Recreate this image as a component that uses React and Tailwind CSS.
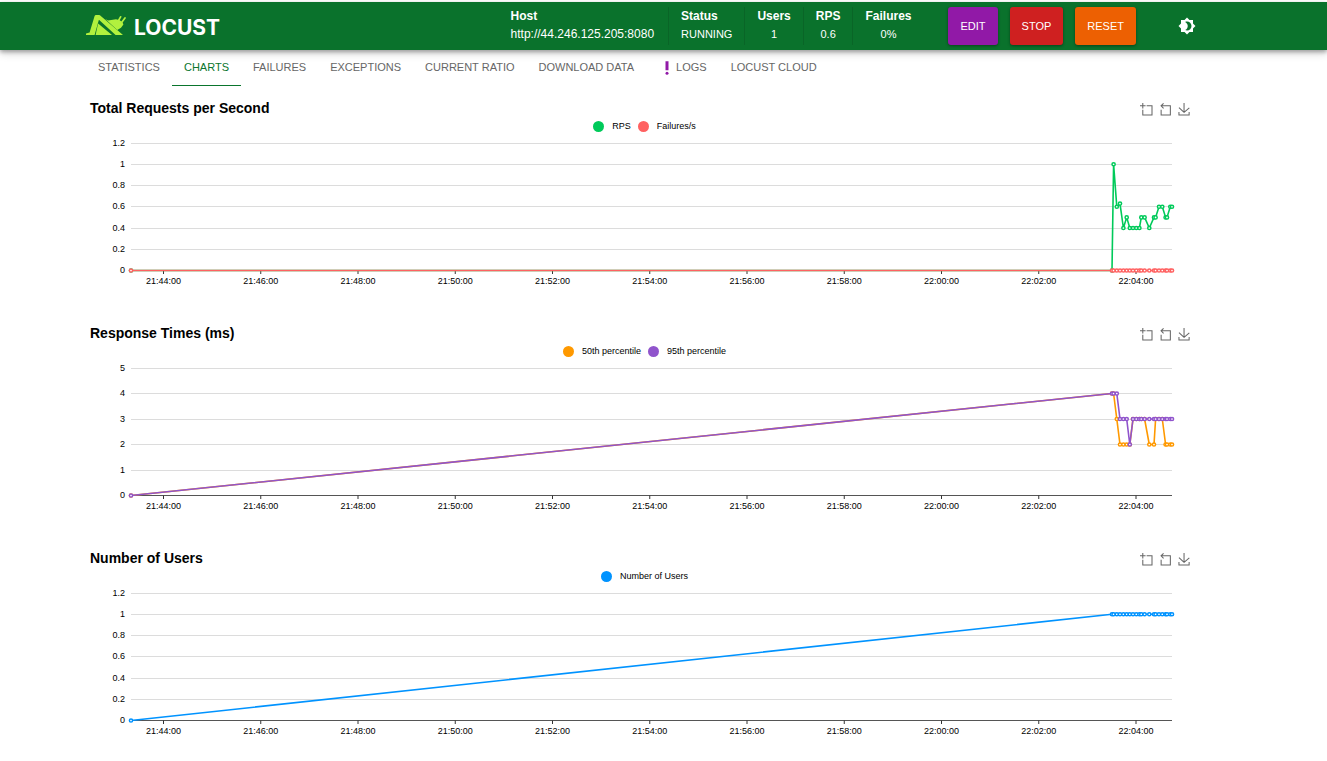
import React from "react";
import { MdBrightness4, MdPriorityHigh } from "react-icons/md";

const TABS = [
  { label: "STATISTICS" },
  { label: "CHARTS", active: true },
  { label: "FAILURES" },
  { label: "EXCEPTIONS" },
  { label: "CURRENT RATIO" },
  { label: "DOWNLOAD DATA" },
  { label: "LOGS", alert: true },
  { label: "LOCUST CLOUD" },
];

const STATS = [
  { label: "Users", value: "1" },
  { label: "RPS", value: "0.6" },
  { label: "Failures", value: "0%" },
];

const TIMES = [
  "21:44:00", "21:46:00", "21:48:00", "21:50:00", "21:52:00", "21:54:00",
  "21:56:00", "21:58:00", "22:00:00", "22:02:00", "22:04:00",
];

// Sample positions along the time axis, in chart units.
const XS = [
  45, 1026, 1027.6, 1030.8, 1034, 1037.4, 1040.7, 1043.8, 1047, 1050.3, 1053.4,
  1055.3, 1058.6, 1063.3, 1068, 1069.6, 1073, 1076.3, 1079.6, 1081, 1084.3, 1086,
];

const rep = (v, n) => Array(n).fill(v);

const CHARTS = [
  {
    title: "Total Requests per Second",
    max: 1.2,
    ticks: [0, 0.2, 0.4, 0.6, 0.8, 1, 1.2],
    series: [
      {
        name: "RPS",
        color: "#00ca5a",
        data: [0, 0, 1, 0.6, 0.63, 0.4, 0.5, 0.4, 0.4, 0.4, 0.4, 0.5, 0.5, 0.4, 0.5, 0.5, 0.6, 0.6, 0.5, 0.5, 0.6, 0.6],
      },
      { name: "Failures/s", color: "#ff6161", data: rep(0, 22) },
    ],
  },
  {
    title: "Response Times (ms)",
    max: 5,
    ticks: [0, 1, 2, 3, 4, 5],
    series: [
      {
        name: "50th percentile",
        color: "#ff9900",
        data: [0, 4, 4, 3, 2, 2, 2, 2, 3, 3, 3, 3, 3, 2, 2, 3, 3, 3, 2, 2, 2, 2],
      },
      {
        name: "95th percentile",
        color: "#9054cc",
        data: [0, 4, 4, 4, 3, 3, 3, 2, ...rep(3, 14)],
      },
    ],
  },
  {
    title: "Number of Users",
    max: 1.2,
    ticks: [0, 0.2, 0.4, 0.6, 0.8, 1, 1.2],
    series: [{ name: "Number of Users", color: "#0093ff", data: [0, ...rep(1, 21)] }],
  },
];

const TOOLS = [
  { label: "Zoom", d: "M0,13.5h26.9 M13.5,26.9V0 M32.1,13.5H58V58H13.5V32.1" },
  { label: "Zoom reset", d: "M22,1.4L9.9,13.5l12.3,12.3 M10.3,13.5H54.9v44.6H10.3v-26" },
  { label: "Download", d: "M4.7,22.9L29.3,45.5L54.7,23.4M4.6,43.6L4.6,58L53.8,58L53.8,43.6M29.2,45.1L29.2,0" },
];

const BASE = 138.5;
const PLOT = 127.5;

function Logo() {
  return (
    <a href="#home" className="flex items-baseline gap-2 text-white">
      <svg viewBox="0 0 40 20" className="h-5 w-10" fill="#b2f13e" aria-hidden="true">
        <path d="M0 20 V18.400 L3.600 17.400 L8.600 1 Q9 0 10 0 H13 Q14 0 14.800 .9 L37 20 H29.600 L12.900 4.800 L8.600 20 Z" />
        <path d="M9.600 20 L12.100 8.400 L26 20 Z" />
        <path d="M19.200 3.900 L22 5.600 L30 4.200 L33.800 5.200 L36.600 7.400 L37.400 9.400 L35 12.800 L31.300 14.900 Z" />
        <path d="M32.300 6 L34.600 1.800 M35.600 7.600 L39 2.900" stroke="#b2f13e" strokeWidth="1.700" strokeLinecap="round" fill="none" />
      </svg>
      <span className="font-[Inter,sans-serif] text-[21px] leading-5 font-bold">LOCUST</span>
    </a>
  );
}

function Chart({ title, max, ticks, series }) {
  const y = (v) => BASE - (v / max) * PLOT;
  return (
    <section>
      <div className="flex h-6 items-center justify-between pr-[13px] pl-1">
        <h2 className="text-sm font-bold text-black">{title}</h2>
        <div className="flex gap-[7px] pt-0.5">
          {TOOLS.map((t) => (
            <button key={t.label} type="button" aria-label={t.label} className="block">
              <svg viewBox="0 0 58 58" className="size-3 overflow-visible" fill="none" stroke="#666" strokeWidth="5">
                <path d={t.d} />
              </svg>
            </button>
          ))}
        </div>
      </div>
      <div className="flex h-3 items-center justify-center gap-[7px] text-[9px] leading-3 text-black">
        {series.map((s) => (
          <span key={s.name} className="flex items-center gap-2">
            <svg viewBox="0 0 11 11" className="size-[11px]" aria-hidden="true">
              <circle cx="5.5" cy="5.5" r="5.5" fill={s.color} />
            </svg>
            {s.name}
          </span>
        ))}
      </div>
      <svg viewBox="0 0 1117 158" className="block h-auto w-full" role="img" aria-label={title}>
        {ticks.map((t) => (
          <g key={t}>
            {t > 0 && (
              <line x1="45" x2="1086" y1={Math.floor(y(t)) + 0.5} y2={Math.floor(y(t)) + 0.5} stroke="#dcdcdc" />
            )}
            <text x="39" y={Math.floor(y(t)) + 3} textAnchor="end" fontSize="9" fill="#000">
              {t}
            </text>
          </g>
        ))}
        <line x1="45" x2="1086" y1={BASE} y2={BASE} stroke="#555" />
        {TIMES.map((t, i) => {
          const x = 77.5 + i * 97.25;
          return (
            <g key={t}>
              <line x1={x} x2={x} y1={BASE} y2={BASE + 3.5} stroke="#333" />
              <text x={x} y="152" textAnchor="middle" fontSize="9" fill="#000">
                {t}
              </text>
            </g>
          );
        })}
        {series.map((s) => (
          <g key={s.name} stroke={s.color}>
            <polyline
              points={s.data.map((v, i) => `${XS[i]},${y(v)}`).join(" ")}
              fill="none"
              strokeWidth="1.6"
              strokeLinejoin="bevel"
            />
            {s.data.map((v, i) => (
              <circle key={i} cx={XS[i]} cy={y(v)} r="1.6" fill="#fff" strokeWidth="1.5" />
            ))}
          </g>
        ))}
      </svg>
    </section>
  );
}

export default function App() {
  return (
    <div className="min-h-screen bg-white pt-0.5 font-['Liberation_Sans',Arial,sans-serif]">
      <header className="flex h-12 items-center justify-between bg-[#0a722c] pr-[131px] pl-[86px] text-white shadow-[0_2px_4px_rgba(0,0,0,0.3),0_4px_8px_rgba(0,0,0,0.14)]">
        <Logo />
        <div className="flex items-center">
          <dl className="flex divide-x divide-[#096527]">
            <div className="flex h-[38px] flex-col pr-[14px] pl-3">
              <dt className="text-xs leading-[18px] font-bold">Host</dt>
              <dd className="text-xs leading-[18px]">http://44.246.125.205:8080</dd>
            </div>
            <div className="flex h-[38px] flex-col px-3">
              <dt className="text-xs leading-[18px] font-bold">Status</dt>
              <dd className="text-[11px] leading-[18px]">RUNNING</dd>
            </div>
            {STATS.map((s) => (
              <div key={s.label} className="flex h-[38px] flex-col items-center px-3">
                <dt className="text-xs leading-[18px] font-bold">{s.label}</dt>
                <dd className="text-[11px] leading-[18px]">{s.value}</dd>
              </div>
            ))}
          </dl>
          <div className="ml-[25px] flex gap-3 text-[11px]">
            <button type="button" className="h-[38px] rounded-[3px] bg-[#9119a7] px-3 shadow-[0_1px_3px_rgba(0,0,0,0.4)]">EDIT</button>
            <button type="button" className="h-[38px] rounded-[3px] bg-[#cf2020] px-3 shadow-[0_1px_3px_rgba(0,0,0,0.4)]">STOP</button>
            <button type="button" className="h-[38px] rounded-[3px] bg-[#ed6002] px-3 shadow-[0_1px_3px_rgba(0,0,0,0.4)]">RESET</button>
          </div>
          <button type="button" aria-label="Toggle theme" className="ml-[42px]">
            <MdBrightness4 size={18} />
          </button>
        </div>
      </header>
      <nav className="flex h-9 pl-[86px] text-[11px] text-[#666]">
        {TABS.map((t) => (
          <a
            key={t.label}
            href="#tab"
            aria-current={t.active ? "page" : undefined}
            className={
              t.active
                ? "flex items-center border-b border-[#0a752d] px-3 text-[#0a752d]"
                : "flex items-center border-b border-transparent px-3"
            }
          >
            {t.alert && <MdPriorityHigh size={18} color="#9119a7" />}
            {t.label}
          </a>
        ))}
      </nav>
      <main className="flex flex-col gap-[31px] pt-[10px] pr-[124px] pl-[86px]">
        {CHARTS.map((c) => (
          <Chart key={c.title} {...c} />
        ))}
      </main>
    </div>
  );
}
